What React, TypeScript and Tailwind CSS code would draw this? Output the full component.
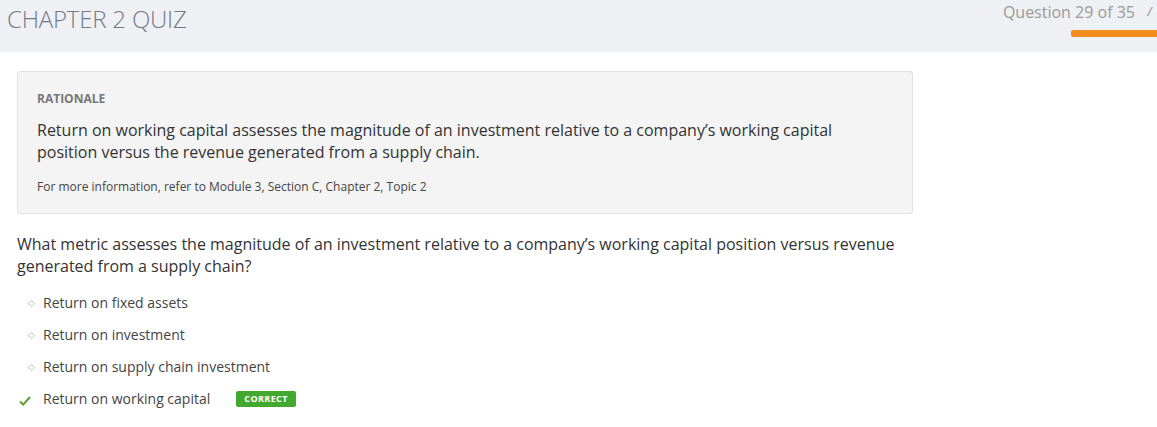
import React from 'react';

const options = [
  { label: 'Return on fixed assets', correct: false },
  { label: 'Return on investment', correct: false },
  { label: 'Return on supply chain investment', correct: false },
  { label: 'Return on working capital', correct: true },
];

const App: React.FC = () => {
  return (
    <div className="min-h-screen bg-white text-[#333]" style={{ fontFamily: '"Open Sans", "Liberation Sans", sans-serif' }}>
      {/* Header */}
      <header className="h-[52px] bg-[#eff0f4] flex justify-between overflow-hidden">
        <h1 className="pl-[7px] pt-[2px] text-[24px] font-light leading-[34px] text-[#6f7a88] tracking-[-0.2px]">CHAPTER 2 QUIZ</h1>
        <div className="flex flex-col items-end">
          <div className="flex items-center pt-[1px]">
            <span className="text-[16px] leading-[22px] text-[#9a9a9a]">Question 29 of 35</span>
            <span className="ml-[12px] w-[10px] text-[12px] italic font-bold text-[#b0b0b0] leading-[22px]">/</span>
          </div>
          <div className="mt-[7px] h-[7px] w-[86px] rounded-l-[2px] bg-[#f28c1f]" />
        </div>
      </header>

      <main className="px-[17px] pt-[19px]">
        {/* Rationale */}
        <section className="w-[896px] rounded-[3px] border border-[#e1e1e1] bg-[#f4f4f4] px-[19px] pt-[19px] pb-[18px]">
          <h2 className="text-[12px] font-bold leading-[16px] text-[#777]">RATIONALE</h2>
          <p className="mt-[12px] text-[16px] leading-[22px] text-[#333]">
            Return on working capital assesses the magnitude of an investment relative to a company’s working capital
            <br />
            position versus the revenue generated from a supply chain.
          </p>
          <p className="mt-[16px] text-[12px] leading-[16px] text-[#444]">
            For more information, refer to Module 3, Section C, Chapter 2, Topic 2
          </p>
        </section>

        {/* Question */}
        <p className="mt-[19px] text-[16px] leading-[22px] text-[#333]">
          What metric assesses the magnitude of an investment relative to a company’s working capital position versus revenue
          <br />
          generated from a supply chain?
        </p>

        <ul className="mt-[16px] flex flex-col gap-[12px]">
          {options.map((o) => (
            <li key={o.label} className="flex items-center h-[20px]">
              <span className="w-[26px] flex items-center justify-center">
                {o.correct ? (
                  <svg width="12" height="10" viewBox="0 0 12 10" className="ml-[-10px] mt-[3px]">
                    <path d="M1 5.5 L4.2 8.6 L11 1" fill="none" stroke="#5b9e2d" strokeWidth="2" />
                  </svg>
                ) : (
                  <svg width="7" height="7" viewBox="0 0 7 7" className="ml-[2px]">
                    <path d="M3.5 0.5 L6.5 3.5 L3.5 6.5 L0.5 3.5 Z" fill="none" stroke="#c4c4c4" strokeWidth="1" />
                  </svg>
                )}
              </span>
              <span className="text-[14px] leading-[20px] text-[#444]">{o.label}</span>
              {o.correct && (
                <span className="ml-[26px] h-[16px] px-[8px] rounded-[2px] bg-[#43a82e] text-white text-[9px] font-bold tracking-[0.4px] leading-[16px]">
                  CORRECT
                </span>
              )}
            </li>
          ))}
        </ul>
      </main>
    </div>
  );
};

export default App;
